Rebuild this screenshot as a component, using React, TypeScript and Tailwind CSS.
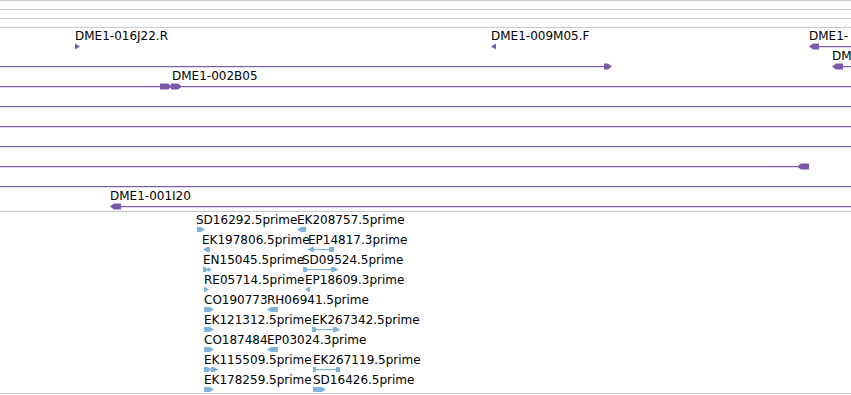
import React from "react";

const PURPLE = "#7a59ad";
const BLUE = "#80b4dd";

type Glyph =
  | { k: "line"; x1: number; x2: number }
  | { k: "triR" | "triL" | "arrR" | "arrL" | "box"; x1: number; x2: number };

type Label = { x: number; t: string };

type Row = { labels: Label[]; glyphs: Glyph[] };

// DME1 clone track (purple)
const cloneRows: Row[] = [
  {
    labels: [
      { x: 75, t: "DME1-016J22.R" },
      { x: 491, t: "DME1-009M05.F" },
      { x: 809, t: "DME1-" },
    ],
    glyphs: [
      { k: "triR", x1: 75, x2: 80 },
      { k: "triL", x1: 491, x2: 496 },
      { k: "line", x1: 818, x2: 851 },
      { k: "arrL", x1: 809, x2: 819 },
    ],
  },
  {
    labels: [{ x: 832, t: "DM" }],
    glyphs: [
      { k: "line", x1: 0, x2: 606 },
      { k: "arrR", x1: 604, x2: 612 },
      { k: "line", x1: 842, x2: 851 },
      { k: "arrL", x1: 832, x2: 843 },
    ],
  },
  {
    labels: [{ x: 172, t: "DME1-002B05" }],
    glyphs: [
      { k: "line", x1: 0, x2: 851 },
      { k: "arrR", x1: 160, x2: 172 },
      { k: "arrR", x1: 171, x2: 182 },
    ],
  },
  { labels: [], glyphs: [{ k: "line", x1: 0, x2: 851 }] },
  { labels: [], glyphs: [{ k: "line", x1: 0, x2: 851 }] },
  { labels: [], glyphs: [{ k: "line", x1: 0, x2: 851 }] },
  {
    labels: [],
    glyphs: [
      { k: "line", x1: 0, x2: 800 },
      { k: "arrL", x1: 797, x2: 809 },
    ],
  },
  { labels: [], glyphs: [{ k: "line", x1: 0, x2: 851 }] },
  {
    labels: [{ x: 110, t: "DME1-001I20" }],
    glyphs: [
      { k: "arrL", x1: 110, x2: 121 },
      { k: "line", x1: 120, x2: 851 },
    ],
  },
];

type EstGlyph = "r" | "l" | "rr" | "sl" | "sr" | "bb";
type Est = { x: number; t: string; g: EstGlyph; x1: number; x2: number };

// EST track (blue)
const estRows: Est[][] = [
  [
    { x: 196, t: "SD16292.5prime", g: "r", x1: 197, x2: 205 },
    { x: 297, t: "EK208757.5prime", g: "l", x1: 297, x2: 306 },
  ],
  [
    { x: 202, t: "EK197806.5prime", g: "l", x1: 203, x2: 210 },
    { x: 308, t: "EP14817.3prime", g: "sl", x1: 308, x2: 334 },
  ],
  [
    { x: 203, t: "EN15045.5prime", g: "rr", x1: 203, x2: 212 },
    { x: 302, t: "SD09524.5prime", g: "sr", x1: 303, x2: 338 },
  ],
  [
    { x: 204, t: "RE05714.5prime", g: "r", x1: 204, x2: 209 },
    { x: 305, t: "EP18609.3prime", g: "l", x1: 305, x2: 310 },
  ],
  [
    { x: 204, t: "CO190773", g: "r", x1: 204, x2: 214 },
    { x: 267, t: "RH06941.5prime", g: "l", x1: 267, x2: 278 },
  ],
  [
    { x: 204, t: "EK121312.5prime", g: "r", x1: 204, x2: 214 },
    { x: 312, t: "EK267342.5prime", g: "sr", x1: 312, x2: 340 },
  ],
  [
    { x: 204, t: "CO187484", g: "r", x1: 204, x2: 214 },
    { x: 267, t: "EP03024.3prime", g: "l", x1: 267, x2: 278 },
  ],
  [
    { x: 204, t: "EK115509.5prime", g: "rr", x1: 204, x2: 218 },
    { x: 313, t: "EK267119.5prime", g: "bb", x1: 313, x2: 340 },
  ],
  [
    { x: 204, t: "EK178259.5prime", g: "r", x1: 204, x2: 214 },
    { x: 313, t: "SD16426.5prime", g: "r", x1: 313, x2: 326 },
  ],
];

function arrowR(x1: number, x2: number, c: number, h: number) {
  const tip = Math.min(4, x2 - x1);
  return `${x1},${c - h} ${x2 - tip},${c - h} ${x2},${c} ${x2 - tip},${c + h} ${x1},${c + h}`;
}

function arrowL(x1: number, x2: number, c: number, h: number) {
  const tip = Math.min(4, x2 - x1);
  return `${x2},${c - h} ${x1 + tip},${c - h} ${x1},${c} ${x1 + tip},${c + h} ${x2},${c + h}`;
}

function PurpleGlyph({ g }: { g: Glyph }) {
  const c = 18.5;
  if (g.k === "line") return <rect x={g.x1} y={18} width={g.x2 - g.x1} height={1.2} fill={PURPLE} />;
  if (g.k === "triR")
    return <polygon points={`${g.x1},${c - 3} ${g.x2},${c} ${g.x1},${c + 3}`} fill={PURPLE} />;
  if (g.k === "triL")
    return <polygon points={`${g.x2},${c - 3} ${g.x1},${c} ${g.x2},${c + 3}`} fill={PURPLE} />;
  if (g.k === "arrR") return <polygon points={arrowR(g.x1, g.x2, c, 3)} fill={PURPLE} />;
  if (g.k === "arrL") return <polygon points={arrowL(g.x1, g.x2, c, 3)} fill={PURPLE} />;
  return <rect x={g.x1} y={c - 3} width={g.x2 - g.x1} height={6} fill={PURPLE} />;
}

function BlueGlyph({ e }: { e: Est }) {
  const c = 17.5;
  const h = 2.5;
  const { x1, x2 } = e;
  if (e.g === "r") return <polygon points={arrowR(x1, x2, c, h)} fill={BLUE} />;
  if (e.g === "l") return <polygon points={arrowL(x1, x2, c, h)} fill={BLUE} />;
  if (e.g === "rr") {
    const m = Math.round((x1 + x2) / 2);
    return (
      <g fill={BLUE}>
        <polygon points={arrowR(x1, m + 1, c, h)} />
        <polygon points={arrowR(m, x2, c, h)} />
      </g>
    );
  }
  const line = <rect x={x1} y={c - 0.5} width={x2 - x1} height={1.2} fill={BLUE} />;
  if (e.g === "sl")
    return (
      <g fill={BLUE}>
        {line}
        <polygon points={arrowL(x1, x1 + 6, c, h)} />
        <rect x={x2 - 5} y={c - h} width={5} height={h * 2} />
      </g>
    );
  if (e.g === "sr")
    return (
      <g fill={BLUE}>
        {line}
        <rect x={x1} y={c - h} width={4} height={h * 2} />
        <polygon points={arrowR(x2 - 7, x2, c, h)} />
      </g>
    );
  return (
    <g fill={BLUE}>
      {line}
      <rect x={x1} y={c - h} width={3} height={h * 2} />
      <rect x={x2 - 4} y={c - h} width={4} height={h * 2} />
    </g>
  );
}

function Text({ x, t }: Label) {
  return (
    <span
      className="absolute top-[1px] whitespace-nowrap text-[12px] leading-[14px] text-black"
      style={{ left: x }}
    >
      {t}
    </span>
  );
}

export default function App() {
  return (
    <div className="w-[851px] h-[395px] overflow-hidden bg-white font-['DejaVu_Sans',sans-serif]">
      <div className="h-[9px] border-t border-[#c8c8c8]" />
      <div className="h-[9px] border-t border-[#c8c8c8]" />
      <div className="h-[9px] border-t border-[#c8c8c8]" />

      {/* clone track */}
      <div className="border-t border-b border-[#c8c8c8] pb-[3px]">
        {cloneRows.map((row, i) => (
          <div key={i} className="relative h-[20px]">
            <svg className="absolute left-0 top-0 overflow-visible" width={851} height={20}>
              {row.glyphs.map((g, j) => (
                <PurpleGlyph key={j} g={g} />
              ))}
            </svg>
            {row.labels.map((l, j) => (
              <Text key={j} {...l} />
            ))}
          </div>
        ))}
      </div>

      {/* EST track */}
      <div className="border-b border-[#c8c8c8] pb-[1px]">
        {estRows.map((row, i) => (
          <div key={i} className="relative h-[20px]">
            <svg className="absolute left-0 top-0 overflow-visible" width={851} height={20}>
              {row.map((e, j) => (
                <BlueGlyph key={j} e={e} />
              ))}
            </svg>
            {row.map((e, j) => (
              <Text key={j} x={e.x} t={e.t} />
            ))}
          </div>
        ))}
      </div>
    </div>
  );
}
